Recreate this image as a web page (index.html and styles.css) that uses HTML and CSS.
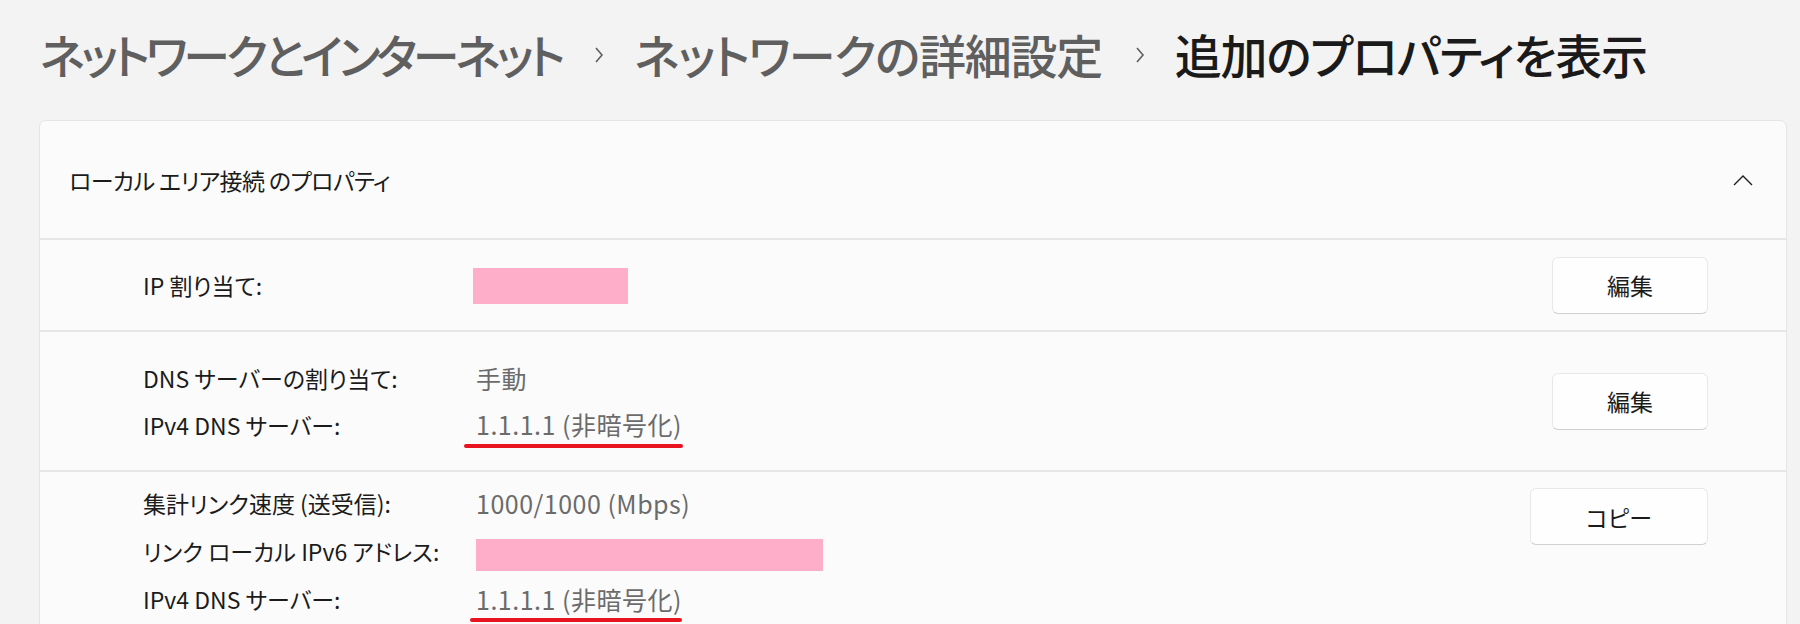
FILE: index.html
```html
<!DOCTYPE html>
<html lang="ja">
<head>
<meta charset="utf-8">
<title>追加のプロパティを表示</title>
<link rel="stylesheet" href="styles.css">
</head>
<body>
<header class="breadcrumb">
  <span class="crumb crumb-kana">ネットワークとインターネット</span>
  <svg class="crumb-sep" width="12" height="18" viewBox="0 0 12 18"><polyline points="3,2 9,9 3,16" fill="none" stroke="#5f5f5f" stroke-width="1.6"/></svg>
  <span class="crumb">ネットワークの詳細設定</span>
  <svg class="crumb-sep" width="12" height="18" viewBox="0 0 12 18"><polyline points="3,2 9,9 3,16" fill="none" stroke="#5f5f5f" stroke-width="1.6"/></svg>
  <span class="crumb current">追加のプロパティを表示</span>
</header>

<section class="card">
  <div class="card-head">
    <span class="card-title">ローカル エリア接続 のプロパティ</span>
    <svg class="chevron" width="20" height="11" viewBox="0 0 20 11"><polyline points="1,10 10,1 19,10" fill="none" stroke="#1b1b1b" stroke-width="1.4"/></svg>
  </div>

  <div class="row row-center row-ip">
    <dl class="props">
      <dt>IP 割り当て:</dt>
      <dd><span class="redact redact-tall" style="width:155px"></span></dd>
    </dl>
    <button class="btn">編集</button>
  </div>

  <div class="row row-center row-dns">
    <dl class="props">
      <dt>DNS サーバーの割り当て:</dt>
      <dd>手動</dd>
      <dt>IPv4 DNS サーバー:</dt>
      <dd><span class="marked">1.1.1.1 (非暗号化)</span></dd>
    </dl>
    <button class="btn">編集</button>
  </div>

  <div class="row row-top row-info">
    <dl class="props">
      <dt>集計リンク速度 (送受信):</dt>
      <dd>1000/1000 (Mbps)</dd>
      <dt>リンク ローカル IPv6 アドレス:</dt>
      <dd><span class="redact redact-low" style="width:347px"></span></dd>
      <dt>IPv4 DNS サーバー:</dt>
      <dd><span class="marked marked-low">1.1.1.1 (非暗号化)</span></dd>
    </dl>
    <button class="btn btn-wide">コピー</button>
  </div>
</section>
</body>
</html>
```

FILE: styles.css
```css
* {
  box-sizing: border-box;
}

html, body {
  margin: 0;
  padding: 0;
  background: #f3f3f3;
  overflow: hidden;
}

body {
  font-family: "Noto Sans CJK JP", "Noto Sans", sans-serif;
  font-feature-settings: "palt";
  color: #1b1b1b;
  height: 624px;
}

.breadcrumb {
  display: flex;
  align-items: center;
  height: 108px;
  padding-left: 40px;
  padding-bottom: 2px;
}

.crumb {
  font-size: 47px;
  font-weight: 500;
  color: #5f5f5f;
  letter-spacing: -1.3px;
  white-space: nowrap;
  line-height: 1;
}

.crumb-kana {
  letter-spacing: -4.1px;
}

.crumb.current {
  color: #1a1a1a;
}

.crumb-sep {
  margin: 4px 29px 0 32px;
  flex: none;
}

.card {
  margin: 12px 13px 0 39px;
  background: #fbfbfb;
  border: 1px solid #e5e5e5;
  border-radius: 7px;
  overflow: hidden;
}

.card-head {
  display: flex;
  align-items: center;
  justify-content: space-between;
  height: 117px;
  padding: 0 33px 0 29px;
}

.card-title {
  font-size: 23px;
  letter-spacing: -0.6px;
  white-space: nowrap;
}

.chevron {
  flex: none;
  margin-top: 2px;
}

.row {
  display: flex;
  justify-content: space-between;
  border-top: 2px solid #e6e6e6;
  padding: 0 78px 0 103px;
}

.row-center {
  align-items: center;
}

.row-top {
  align-items: flex-start;
}

.row-ip {
  height: 92px;
}

.row-dns {
  height: 140px;
}

.row-info {
  padding-top: 7px;
  padding-bottom: 30px;
}

.props {
  display: grid;
  grid-template-columns: 333px auto;
  grid-auto-rows: 47px;
  margin: 0;
  font-size: 23px;
}

.row-info .props {
  grid-auto-rows: 48px;
}

.props dt,
.props dd {
  margin: 0;
  display: flex;
  align-items: center;
  white-space: nowrap;
}

.props dt {
  color: #1b1b1b;
}

.props dd {
  color: #6b6b6b;
  font-size: 25px;
  letter-spacing: 0.5px;
}

.redact {
  display: inline-block;
  height: 32px;
  background: #ffaec9;
}

.redact-tall {
  height: 36px;
  margin-left: -3px;
  margin-top: 2px;
}

.redact-low {
  margin-top: 8px;
}

.marked {
  position: relative;
  display: inline-block;
  line-height: 35px;
}

.marked::after {
  content: "";
  position: absolute;
  left: -12px;
  right: -1px;
  bottom: -6px;
  height: 4px;
  border-radius: 2px;
  background: #e8141f;
}

.marked-low::after {
  left: -6px;
  right: 0;
  bottom: -5px;
}

.btn {
  flex: none;
  width: 156px;
  height: 57px;
  font-family: inherit;
  font-feature-settings: "palt";
  font-size: 23px;
  color: #1b1b1b;
  background: #fefefe;
  border: 1px solid #e8e8e8;
  border-bottom-color: #d0d0d0;
  border-radius: 6px;
  padding: 0;
}

.row-info .btn {
  margin-top: 9px;
}

.btn-wide {
  width: 178px;
}
```
